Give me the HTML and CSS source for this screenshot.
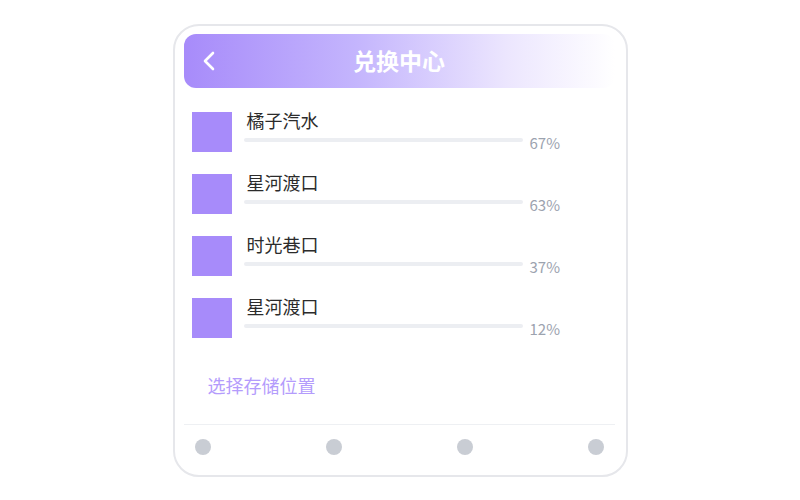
FILE: index.html
```html
<!DOCTYPE html>
<html lang="zh-CN">
<head>
  <meta charset="UTF-8" />
  <meta name="viewport" content="width=device-width, initial-scale=1.0"/>
  <title>兑换中心</title>
  <link rel="stylesheet" href="styles.css">
</head>
<body>

  <div class="phone">
    <!-- Barra superior con degradado -->
    <div class="topbar">
      <span class="back">
        <svg width="12" height="20" viewBox="0 0 12 20"><polyline points="10,2 2,10 10,18" fill="none" stroke="#fff" stroke-width="2.6" stroke-linecap="round" stroke-linejoin="round"/></svg>
      </span>
      <h1>兑换中心</h1>
      <span class="back"></span>
    </div>

    <!-- Lista de artículos -->
    <div class="list">
      <div class="item">
        <div class="thumb"></div>
        <div class="info">
          <div class="name">橘子汽水</div>
          <div class="bar-row"><div class="track"></div><span class="pct">67%</span></div>
        </div>
      </div>
      <div class="item">
        <div class="thumb"></div>
        <div class="info">
          <div class="name">星河渡口</div>
          <div class="bar-row"><div class="track"></div><span class="pct">63%</span></div>
        </div>
      </div>
      <div class="item">
        <div class="thumb"></div>
        <div class="info">
          <div class="name">时光巷口</div>
          <div class="bar-row"><div class="track"></div><span class="pct">37%</span></div>
        </div>
      </div>
      <div class="item">
        <div class="thumb"></div>
        <div class="info">
          <div class="name">星河渡口</div>
          <div class="bar-row"><div class="track"></div><span class="pct">12%</span></div>
        </div>
      </div>
    </div>

    <div class="store">选择存储位置</div>

    <!-- Puntos de navegación -->
    <div class="tabs">
      <span class="dot"></span>
      <span class="dot"></span>
      <span class="dot"></span>
      <span class="dot"></span>
    </div>
  </div>

</body>
</html>
```

FILE: styles.css
```css
body {
  margin: 0;
  padding: 0;
  background: #ffffff;
  font-family: "Noto Sans CJK SC", "Noto Sans", sans-serif;
  height: 100vh;
  display: flex;
  justify-content: center;
  align-items: center;
}

.phone {
  box-sizing: border-box;
  width: 455px;
  height: 453px;
  border: 2px solid #e6e7eb;
  border-radius: 26px;
  padding: 8px 11px 0 9px;
  display: flex;
  flex-direction: column;
}

.topbar {
  height: 54px;
  flex-shrink: 0;
  border-radius: 12px;
  background: linear-gradient(90deg, #a78bfa 0%, #c4b5fd 40%, #ece6fe 75%, #ffffff 100%);
  display: flex;
  align-items: center;
  padding: 0 19px;
}

.back {
  width: 12px;
  height: 20px;
  display: flex;
}

.topbar h1 {
  flex: 1;
  margin: 0;
  text-align: center;
  font-size: 23px;
  font-weight: 700;
  color: #ffffff;
  line-height: 1;
}

.list {
  margin-top: 24px;
  padding-left: 8px;
  display: flex;
  flex-direction: column;
  gap: 22px;
}

.item {
  display: flex;
  gap: 12px;
}

.thumb {
  width: 40px;
  height: 40px;
  background: #a78bfa;
  flex-shrink: 0;
}

.info {
  display: flex;
  flex-direction: column;
}

.name {
  font-size: 18px;
  line-height: 17px;
  color: #2b2b2b;
  padding-left: 3px;
}

.bar-row {
  height: 23px;
  display: flex;
  align-items: center;
}

.track {
  width: 279px;
  height: 4px;
  border-radius: 2px;
  background: #eceef2;
}

.pct {
  margin-left: 7px;
  font-size: 15px;
  color: #9ca3af;
  padding-top: 4px;
}

.store {
  margin-top: 35px;
  padding-left: 24px;
  font-size: 18px;
  line-height: 24px;
  color: #b49cfc;
}

.tabs {
  margin-top: 27px;
  border-top: 1px solid #eef0f3;
  padding: 14px 10px 0 11px;
  display: flex;
  justify-content: space-between;
}

.dot {
  width: 16px;
  height: 16px;
  border-radius: 50%;
  background: #c9cdd4;
}
```
